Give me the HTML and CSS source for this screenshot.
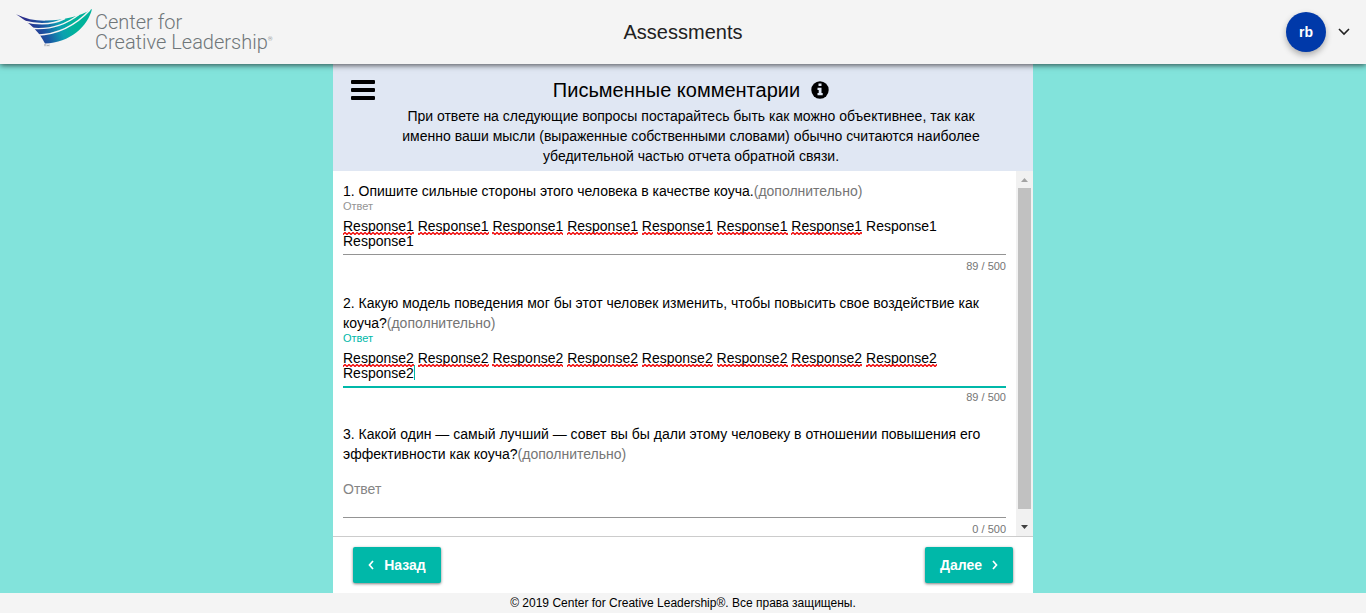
FILE: index.html
```html
<!DOCTYPE html>
<html lang="ru">
<head>
<meta charset="utf-8">
<meta name="viewport" content="width=device-width, initial-scale=1">
<title>Assessments</title>
<link rel="stylesheet" href="styles.css">
</head>
<body>
<header class="topbar">
  <a class="brand" href="#" aria-label="Center for Creative Leadership">
    <svg class="brand-mark" viewBox="0 0 76 38" aria-hidden="true">
      <defs>
        <linearGradient id="wing" gradientUnits="userSpaceOnUse" x1="14" y1="22" x2="54" y2="8">
          <stop offset="0" stop-color="#2b2f8c"/>
          <stop offset="0.35" stop-color="#1a57a3"/>
          <stop offset="0.7" stop-color="#0c9fb0"/>
          <stop offset="1" stop-color="#00b39b"/>
        </linearGradient>
      </defs>
      <path fill="url(#wing)" d="M0 5.200C10 10 20 12 31 11.600C46 11 64 8 76 0C72 17 54 34 29 34.500C26 28 19 17 0 5.200Z"/>
      <path fill="none" stroke="#f4f4f4" stroke-width="1.400" d="M8 12.300C22 16 36 16 49 9.500M15 19.300C32 21 48 17 63 5.500M21 26.200C40 25.500 58 18 74 1"/>
      <path fill="none" stroke="#8b8f93" stroke-width="0.600" d="M28 35.800h2M29 35.800v1.500M31 37.300v-1.500l1 1 1-1v1.500"/>
    </svg>
    <span class="brand-name">Center for<br>Creative Leadership<sup class="brand-reg">®</sup></span>
  </a>
  <h1 class="topbar-title">Assessments</h1>
  <div class="account">
    <span class="avatar">rb</span>
    <button class="account-toggle" type="button" aria-label="Account menu">
      <svg width="12" height="8" viewBox="0 0 12 8" aria-hidden="true"><path d="M1 1l5 5 5-5" fill="none" stroke="#222" stroke-width="1.600"/></svg>
    </button>
  </div>
</header>

<main class="page">
  <form class="sheet">
    <div class="intro">
      <button class="menu" type="button" aria-label="Меню">
        <svg width="24" height="20" viewBox="0 0 24 20" aria-hidden="true"><g fill="#000"><rect width="24" height="4" rx="1"/><rect y="8" width="24" height="4" rx="1"/><rect y="16" width="24" height="4" rx="1"/></g></svg>
      </button>
      <div class="intro-body">
        <h2 class="intro-title">Письменные комментарии
          <button class="info" type="button" aria-label="Информация">
            <svg width="18" height="18" viewBox="0 0 18 18" aria-hidden="true"><circle cx="9" cy="9" r="8.700" fill="#000"/><path fill="#e0e7f3" d="M7.500 2.500h3v2.500h-3zM6.500 6.800h4v5.200h1.200v2.200h-5.200V12h1.200V9H6.500z"/></svg>
          </button>
        </h2>
        <p class="intro-text">При ответе на следующие вопросы постарайтесь быть как можно объективнее, так как именно ваши мысли (выраженные собственными словами) обычно считаются наиболее убедительной частью отчета обратной связи.</p>
      </div>
    </div>

    <div class="viewport">
      <div class="questions">
        <svg class="defs" width="0" height="0" aria-hidden="true">
          <defs>
            <pattern id="wave" width="4" height="3" patternUnits="userSpaceOnUse"><path d="M-1 1.500L0 2.500L2 0.500L4 2.500L5 1.500" fill="none" stroke="#f00000" stroke-width="1.300"/></pattern>
          </defs>
        </svg>

        <section class="question">
          <p class="question-text">1. Опишите сильные стороны этого человека в качестве коуча.<span class="optional">(дополнительно)</span></p>
          <label class="label" for="a1">Ответ</label>
          <div class="field">
            <textarea class="answer answer-filled" id="a1" rows="2" spellcheck="false">Response1 Response1 Response1 Response1 Response1 Response1 Response1 Response1 Response1</textarea>
            <svg class="squiggle" width="600" height="3" aria-hidden="true"><g fill="url(#wave)"><rect width="71" height="3"/><rect x="75" width="71" height="3"/><rect x="149" width="71" height="3"/><rect x="224" width="71" height="3"/><rect x="299" width="71" height="3"/><rect x="374" width="71" height="3"/><rect x="448" width="71" height="3"/></g></svg>
          </div>
          <p class="count">89 / 500</p>
        </section>

        <section class="question question-active">
          <p class="question-text">2. Какую модель поведения мог бы этот человек изменить, чтобы повысить свое воздействие как коуча?<span class="optional">(дополнительно)</span></p>
          <label class="label" for="a2">Ответ</label>
          <div class="field">
            <textarea class="answer answer-filled" id="a2" rows="2" spellcheck="false">Response2 Response2 Response2 Response2 Response2 Response2 Response2 Response2 Response2</textarea>
            <svg class="squiggle" width="600" height="3" aria-hidden="true"><g fill="url(#wave)"><rect width="71" height="3"/><rect x="75" width="71" height="3"/><rect x="149" width="71" height="3"/><rect x="224" width="71" height="3"/><rect x="299" width="71" height="3"/><rect x="374" width="71" height="3"/><rect x="448" width="71" height="3"/><rect x="523" width="71" height="3"/></g></svg>
            <span class="caret"></span>
          </div>
          <p class="count">89 / 500</p>
        </section>

        <section class="question">
          <p class="question-text">3. Какой один — самый лучший — совет вы бы дали этому человеку в отношении повышения его эффективности как коуча?<span class="optional">(дополнительно)</span></p>
          <div class="label"></div>
          <div class="field">
            <textarea class="answer" id="a3" rows="2" spellcheck="false" placeholder="Ответ" aria-label="Ответ"></textarea>
          </div>
          <p class="count">0 / 500</p>
        </section>
      </div>
      <div class="scrollbar" aria-hidden="true">
        <svg class="scroll-arrow" viewBox="0 0 17 17"><path fill="#a3a3a3" d="M5 11h7L8.500 7z"/></svg>
        <div class="scroll-track"><div class="scroll-thumb"></div></div>
        <svg class="scroll-arrow" viewBox="0 0 17 17"><path fill="#404040" d="M5 6h7l-3.500 4z"/></svg>
      </div>
    </div>

    <div class="actions">
      <button class="nav-button" type="button">
        <svg width="6" height="10" viewBox="0 0 6 10" aria-hidden="true"><path d="M5 1L1.500 5 5 9" fill="none" stroke="#fff" stroke-width="1.700"/></svg>
        Назад
      </button>
      <button class="nav-button" type="button">
        Далее
        <svg width="6" height="10" viewBox="0 0 6 10" aria-hidden="true"><path d="M1 1l3.500 4L1 9" fill="none" stroke="#fff" stroke-width="1.700"/></svg>
      </button>
    </div>
  </form>
</main>

<footer class="footer">© 2019 Center for Creative Leadership®. Все права защищены.</footer>
</body>
</html>
```
FILE: styles.css
```css
* {
  box-sizing: border-box;
}

body {
  margin: 0;
  height: 100vh;
  display: flex;
  flex-direction: column;
  background: #82e3db;
  color: #000;
  font: 14px/20px "Liberation Sans", Arial, sans-serif;
}

h1, h2, p {
  margin: 0;
  font-weight: 400;
}

button {
  padding: 0;
  border: 0;
  background: none;
  font: inherit;
  cursor: pointer;
}

svg {
  display: block;
}

.topbar {
  position: relative;
  z-index: 1;
  flex: none;
  display: grid;
  grid-template-columns: 1fr auto 1fr;
  align-items: center;
  height: 64px;
  padding: 0 16px;
  background: #f4f4f4;
  box-shadow: 0 1px 6px rgba(0, 0, 0, 0.7);
}

.brand {
  display: flex;
  align-items: center;
  gap: 3px;
  color: #6f7679;
  text-decoration: none;
}

.brand-mark {
  width: 76px;
  height: 38px;
  margin-bottom: 8px;
}

.brand-name {
  font: 300 20px/20px Roboto, sans-serif;
  white-space: nowrap;
}

.brand-reg {
  font-size: 6px;
  line-height: 0;
}

.topbar-title {
  color: #212121;
  font-size: 20px;
  line-height: 24px;
}

.account {
  display: flex;
  justify-content: flex-end;
  align-items: center;
  gap: 12px;
}

.avatar {
  width: 40px;
  height: 40px;
  border-radius: 50%;
  background: #0039a9;
  color: #fff;
  font-weight: 700;
  line-height: 40px;
  text-align: center;
  box-shadow: 0 3px 6px rgba(0, 0, 0, 0.3);
}

.page {
  flex: 1;
  min-height: 0;
  display: flex;
  justify-content: center;
}

.sheet {
  width: 100%;
  max-width: 700px;
  display: flex;
  flex-direction: column;
  background: #fff;
}

.intro {
  flex: none;
  display: flex;
  align-items: flex-start;
  padding: 14px 40px 5px 16px;
  background: #e0e7f3;
}

.menu {
  flex: none;
  width: 40px;
  padding: 2px;
}

.intro-body {
  flex: 1;
  text-align: center;
}

.intro-title {
  display: flex;
  justify-content: center;
  align-items: center;
  gap: 11px;
  font-size: 20px;
  line-height: 24px;
  padding-bottom: 4px;
}

.viewport {
  flex: 1;
  min-height: 0;
  display: flex;
  border-bottom: 1px solid #ccc;
}

.questions {
  flex: 1;
  padding: 10px 10px 0;
  overflow-y: auto;
  scrollbar-width: none;
}

.defs {
  position: absolute;
}

.question {
  padding-bottom: 20px;
}

.optional {
  color: #757575;
}

.label {
  display: block;
  height: 12px;
  color: #949494;
  font-size: 11px;
  line-height: 10px;
}

.field {
  position: relative;
  border-bottom: 1px solid #949494;
}

.answer {
  display: block;
  width: 100%;
  height: 41px;
  padding: 6px 0 5px;
  border: 0;
  outline: 0;
  resize: none;
  overflow: hidden;
  background: none;
  color: #000;
  font: inherit;
  line-height: 15px;
}

.answer-filled {
  padding-right: 60px;
}

.answer::placeholder {
  color: #858585;
  opacity: 1;
}

.squiggle {
  position: absolute;
  left: 0;
  top: 19px;
  pointer-events: none;
}

.caret {
  position: absolute;
  left: 71px;
  top: 20px;
  width: 1px;
  height: 15px;
  background: #00b8a9;
}

.count {
  padding-top: 4px;
  color: #757575;
  font-size: 11px;
  line-height: 14px;
  text-align: right;
}

.question-active .label {
  color: #00b8a9;
}

.question-active .field {
  border-bottom: 2px solid #00b8a9;
}

.question-active .count {
  padding-top: 2px;
}

.scrollbar {
  flex: none;
  width: 17px;
  display: flex;
  flex-direction: column;
  background: #f1f1f1;
}

.scroll-arrow {
  flex: none;
  width: 17px;
  height: 17px;
}

.scroll-track {
  flex: 1;
  padding: 0 2px;
}

.scroll-thumb {
  height: 97%;
  background: #c1c1c1;
}

.actions {
  flex: none;
  display: flex;
  justify-content: space-between;
  padding: 10px 20px;
}

.nav-button {
  display: flex;
  justify-content: center;
  align-items: center;
  gap: 10px;
  width: 88px;
  height: 36px;
  border-radius: 2px;
  background: #00b8a9;
  color: #fff;
  font-weight: 700;
  box-shadow: 0 1px 3px rgba(0, 0, 0, 0.5);
}

.footer {
  flex: none;
  background: #f4f4f4;
  font-size: 12px;
  line-height: 20px;
  text-align: center;
}
```
